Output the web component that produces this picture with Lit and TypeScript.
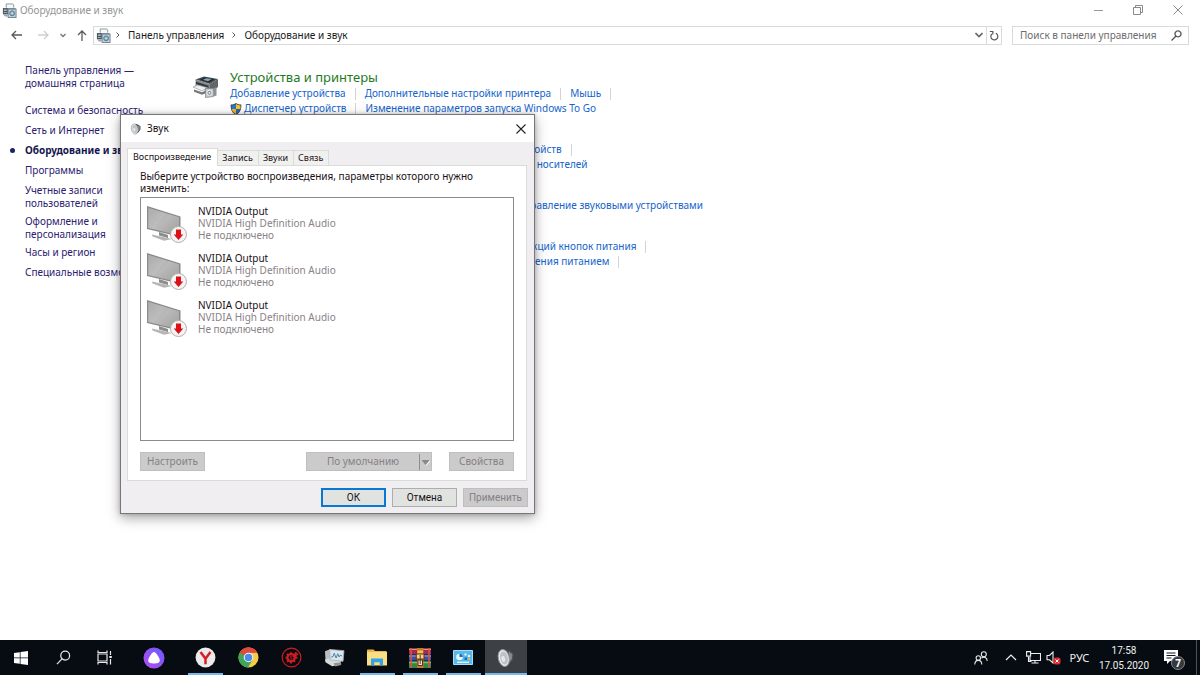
import { LitElement, html, css, svg, nothing } from "lit";
import { customElement, state } from "lit/decorators.js";
import { classMap } from "lit/directives/class-map.js";

/* ---------- icons ---------- */

const printerSmall = html`<svg viewBox="0 0 16 16" width="15" height="15" aria-hidden="true">
  <path d="M4.5 5V1h7l1 1.2V5" fill="#f4f6f7" stroke="#8b959b" />
  <path d="M1 5.5h13.5v6.5H1z" fill="#6d7880" />
  <path d="M1 5.5h5v6.5H1z" fill="#4c565e" />
  <path d="M2 7h3v1.2H2zM2 9.5h3v1H2z" fill="#b9d3e0" />
  <rect x="6.5" y="6.5" width="8.5" height="9" fill="#c3ced5" stroke="#6f8592" />
  <circle cx="10.8" cy="11" r="2.6" fill="#8fb4c9" stroke="#4f7890" />
  <circle cx="10.8" cy="11" r="0.8" fill="#eef6fa" />
  <path d="M1.5 12.5h4.5v2H3z" fill="#9aa4aa" />
</svg>`;

const printerLarge = html`<svg viewBox="0 0 26 24" width="26" height="24" aria-hidden="true">
  <path d="M2.500 4.500 11 1.500l14 2.500-8 5z" fill="#4a5054" />
  <path d="M6 4.500 12 2.300l10 1.900-6 3.600z" fill="#2a2e31" />
  <path d="M10 4.800 13.500 3.200l5 .9-3.500 2.200z" fill="#7fa9bf" />
  <path d="M2.500 4.500l14.500 4.500v8L2.500 12z" fill="#85898c" />
  <path d="M17 9l8-5v8l-8 6z" fill="#5f6568" />
  <path d="M3 6.800l12.500 4v2.200L3 9z" fill="#33383b" />
  <path d="M0 12 4.500 10l10 2.700-5.500 3.300z" fill="#eceeee" stroke="#8d9294" stroke-width=".6" />
  <path d="M1 14.500 9 17.200l5-2.500v3L9 19.700l-8-2.900z" fill="#74797c" />
  <path d="M12.500 13.500h8v8l-8 1z" fill="#c4c8ca" stroke="#7d8386" stroke-width=".7" />
  <circle cx="16.500" cy="17.800" r="2.600" fill="#8f979b" stroke="#f0f2f3" />
  <circle cx="16.500" cy="17.800" r=".9" fill="#f2f4f5" />
  <path d="M20.500 13.500l3-1.500v8.500l-3 1z" fill="#8c9295" />
</svg>`;

const shield = html`<svg viewBox="0 0 14 15" width="12" height="14" aria-hidden="true">
  <path d="M7 .5c1.800 1.300 3.900 1.800 6.200 1.800.3 6.200-1.700 10-6.200 12.200C2.500 12.300.5 8.500.8 2.300 3.100 2.300 5.200 1.800 7 .5z" fill="#3d4246" />
  <path d="M7 1.800v5.600H1.900C1.700 6 1.700 4.600 1.800 3.300 3.700 3.200 5.500 2.700 7 1.800z" fill="#2577c8" />
  <path d="M7 1.800v5.600h5.100c.2-1.400.2-2.800.1-4.100-1.900-.1-3.700-.6-5.200-1.500z" fill="#f7c331" />
  <path d="M7 7.400v5.900c-3-1.500-4.600-3.500-5.100-5.900z" fill="#f3b61f" />
  <path d="M7 7.400v5.900c3-1.500 4.600-3.500 5.100-5.900z" fill="#2166b0" />
</svg>`;

const speaker = (size: number) => html`<svg viewBox="0 0 20 22" width=${size} height=${size} aria-hidden="true">
  <path d="M9 1.500 14.500 3l4 3.500-.5 6-3.500 4.500L9 20.500z" fill="#4c5053" />
  <path d="M13 3.500l4 3.500-.5 5-3 4z" fill="#85898c" />
  <ellipse cx="7.500" cy="11" rx="6" ry="9.500" fill="#e6e9ea" stroke="#8c9296" transform="rotate(-12 7.500 11)" />
  <ellipse cx="7.800" cy="11" rx="4.200" ry="7.300" fill="#bcc2c6" transform="rotate(-12 7.800 11)" />
  <ellipse cx="7" cy="12" rx="2" ry="3.400" fill="#e3e7e9" transform="rotate(-12 7 12)" />
</svg>`;

const stroke = (w: number, h: number, d: string, color = "#5a5a5a", width = 1.3) =>
  html`<svg viewBox="0 0 ${w} ${h}" width=${w} height=${h} fill="none" stroke=${color} stroke-width=${width} aria-hidden="true">${svg`<path d=${d} />`}</svg>`;

const monitor = html`<svg viewBox="0 0 42 40" width="42" height="40" aria-hidden="true">
  <defs>
    <linearGradient id="screen" x1="0" y1="0" x2="1" y2="1">
      <stop offset="0" stop-color="#a2a2a2" /><stop offset=".5" stop-color="#b9b9b9" /><stop offset="1" stop-color="#9f9f9f" />
    </linearGradient>
  </defs>
  <path d="M6 29.500 19 32.500l7 1.500-8 1.800L6.500 31.500z" fill="#b5b5b5" />
  <path d="M13 27l9 3v3l-9-2.500z" fill="#8d8d8d" />
  <path d="M1 1 34.500 11.500V32L1 24z" fill="#8a8a8a" />
  <path d="M2.200 2.700 33 12.300V30.200L2.200 22.900z" fill="url(#screen)" />
  <path d="M2.200 2.700 20 8.200 8 24.200 2.200 22.900z" fill="#fff" opacity=".1" />
  <circle cx="32.500" cy="29.500" r="8" fill="#f6f4f4" stroke="#b3aeae" />
  <path d="M30 24.500h5v5h2.300L32.500 35l-4.800-5.500H30z" fill="#db1018" />
</svg>`;

const taskIcons: Record<string, unknown> = {
  start: html`<svg viewBox="0 0 14 14" width="14" height="14" fill="#fff"><path d="M0 2 5.800 1.200v5.400H0zM6.500 1.100 14 0v6.600H6.500zM0 7.300h5.800v5.500L0 12zM6.500 7.300H14V14l-7.500-1.100z" /></svg>`,
  search: html`<svg viewBox="0 0 16 16" width="15" height="15" fill="none" stroke="#e8e8e8" stroke-width="1.300"><circle cx="9.800" cy="6" r="4.700" /><path d="M6.400 9.400 1 15" /></svg>`,
  tasks: html`<svg viewBox="0 0 16 15" width="16" height="15" fill="none" stroke="#e8e8e8" stroke-width="1.200"><path d="M1 4h9v7H1zM1 .5v2h9v-2M1 14.500v-2h9v2M13.500 1v4M13.500 9v5.500" /><path d="M12.300 6h2.500v2h-2.500z" fill="#e8e8e8" stroke="none" /></svg>`,
  alice: html`<svg viewBox="0 0 22 22" width="22" height="22"><defs><linearGradient id="al" x1="1" y1="0" x2="0" y2="1"><stop offset="0" stop-color="#6a5cff" /><stop offset="1" stop-color="#b44cf0" /></linearGradient></defs><circle cx="11" cy="11" r="10.500" fill="url(#al)" /><path d="M11 5c2 0 5.800 6.200 5.800 8.600 0 2.400-3 3-5.800 3s-5.800-.6-5.800-3C5.200 11.200 9 5 11 5z" fill="#fff" /></svg>`,
  yandex: html`<svg viewBox="0 0 22 22" width="21" height="21"><circle cx="11" cy="11" r="10.400" fill="#eceaea" /><path d="M5.800 5.200 11 12.300l5.200-7.100M11 12v6" fill="none" stroke="#d81e20" stroke-width="2.600" /></svg>`,
  chrome: html`<svg viewBox="0 0 22 22" width="21" height="21"><circle cx="11" cy="11" r="10.500" fill="#f6cb45" /><path d="M11 11 1.900 5.700A10.500 10.500 0 0 1 20.100 5.700L11 6z" fill="#dc4b3e" /><path d="M11 11 1.900 5.750A10.500 10.500 0 0 0 10.500 21.500L15.300 13.400z" fill="#3ea55a" /><path d="M1.900 5.700 6.600 13.500 11 11V6z" fill="#3ea55a" /><path d="M1.900 5.700A10.500 10.500 0 0 1 20.100 6H11L6.500 9z" fill="#dc4b3e" /><circle cx="11" cy="11" r="5" fill="#f4f4f4" /><circle cx="11" cy="11" r="3.900" fill="#4a8bf0" /></svg>`,
  gear: html`<svg viewBox="0 0 22 22" width="21" height="21" fill="none" stroke="#d01c22"><circle cx="11" cy="11" r="9.800" stroke-width="1.200" /><circle cx="10.500" cy="11.300" r="3.800" stroke-width="2.400" /><path d="M10.500 5.500v2M10.500 15v2.300M4.700 11.300h2M14 11.300h3.200M6.300 7.200l1.500 1.500M6.300 15.500l1.500-1.500M14.700 15.500l-1.500-1.500" stroke-width="2" /><path d="M13 7.700h5M15.500 5.200v5" stroke-width="1.700" /><path d="M12 10c-2-1-3 .8-1.500 1.300s1 2-1.200 1.300" stroke-width="1" /></svg>`,
  perf: html`<svg viewBox="0 0 22 20" width="21" height="19"><path d="M1 3.500 7 1l1 10-6.500 2z" fill="#b9bec2" /><path d="M1 12l7-1.500 10 3-1.500 4-8 1.700L1.500 15z" fill="#d7dadc" /><path d="M10 16l8-1v3l-6 1.500z" fill="#8d9397" /><path d="M6 1.500 21 2.800 20 14 6.500 12.500z" fill="#dfe4e7" stroke="#aab0b4" stroke-width=".8" /><path d="M7.500 9.500l2-.5 1.200-3.500 2 5 1.700-4.500 1.500 3.500 1-2 2.300 1" fill="none" stroke="#3187b8" /></svg>`,
  explorer: html`<svg viewBox="0 0 20 17" width="20" height="17"><path d="M0 1.500C0 .7.500.5 1 .5h5.500L8 2h11.500v14H0z" fill="#e8b64a" /><path d="M0 3h20v13.500H0z" fill="#fbdd86" /><path d="M4 16.500V9.500h12v7h-3.300v-3.200H7.300v3.200z" fill="#31a4e8" /></svg>`,
  rar: html`<svg viewBox="0 0 22 20" width="22" height="20"><path d="M0 0h22v6H0z" fill="#a12a55" /><path d="M0 6.500h22v6H0z" fill="#3a4db0" /><path d="M0 13h22v7H0z" fill="#2f8a4a" /><path d="M0 1.500h22M0 8h22M0 14.700h22" stroke="#e0bf6a" stroke-width=".8" /><path d="M2 0v20M20 0v20" stroke="#d6574a" stroke-width="1.500" /><path d="M8 0h6.500v20H8z" fill="#c8762e" /><path d="M8.500 2.500h5.500v3H8.500z" fill="#f1c24a" /><path d="M7.300 6h7.700v5H7.300z" fill="#f4d58a" stroke="#6d3511" /><path d="M9 12h4.500v5.500H9z" fill="#e9e2d4" stroke="#5c2e14" /><path d="M11.200 7v9" stroke="#713815" /></svg>`,
  panel: html`<svg viewBox="0 0 20 15" width="20" height="15"><path d="M.5.500h19v14H.5z" fill="#58b8ea" stroke="#a5dcf7" /><circle cx="6.500" cy="7" r="3.300" fill="#e9f6fd" /><path d="M6.500 7V3.700A3.300 3.300 0 0 1 9.800 7z" fill="#1d6fb0" /><path d="M4 12.300h12" stroke="#e9f6fd" stroke-width="1.300" /><path d="M11.500 3.500h2v2h-2zM15 5h2v2h-2z" fill="#e9f6fd" /><path d="M11.500 7.500h2.500v2.500h-2.500z" fill="#1d6fb0" /><path d="M15 8h2v2h-2z" fill="#f0b44a" /></svg>`,
  sound: speaker(20),
};

/* ---------- data ---------- */

interface Link { text: string; shield?: boolean; bar?: boolean }
interface Section { title: string; icon?: boolean; rows: Link[][] }

const sections: Section[] = [
  { title: "Устройства и принтеры", icon: true, rows: [
    [{ text: "Добавление устройства", bar: true }, { text: "Дополнительные настройки принтера", bar: true }, { text: "Мышь", bar: true }],
    [{ text: "Диспетчер устройств", shield: true, bar: true }, { text: "Изменение параметров запуска Windows To Go" }],
  ] },
  { title: "Автозапуск", rows: [
    [{ text: "Настройка параметров по умолчанию для носителей или устройств", bar: true }],
    [{ text: "Автоматическое воспроизведение компакт-дисков или других носителей" }],
  ] },
  { title: "Звук", rows: [
    [{ text: "Настройка громкости", bar: true }, { text: "Изменение системных звуков", bar: true }, { text: "Управление звуковыми устройствами" }],
  ] },
  { title: "Электропитание", rows: [
    [{ text: "Изменение параметров энергосбережения", bar: true }, { text: "Настройка функций кнопок питания", bar: true }],
    [{ text: "Настройка перехода в спящий режим", bar: true }, { text: "Выбор схемы управления питанием", bar: true }],
  ] },
];

const categories: { lines: string[]; current?: boolean }[] = [
  { lines: ["Система и безопасность"] },
  { lines: ["Сеть и Интернет"] },
  { lines: ["Оборудование и звук"], current: true },
  { lines: ["Программы"] },
  { lines: ["Учетные записи", "пользователей"] },
  { lines: ["Оформление и", "персонализация"] },
  { lines: ["Часы и регион"] },
  { lines: ["Специальные возможности"] },
];

const control = css`
  :host { display: block; }
  * { box-sizing: border-box; }
  button { font: inherit; color: inherit; background: none; border: 0; padding: 0; margin: 0; border-radius: 0; }
  a { color: inherit; text-decoration: none; }
  ul { list-style: none; margin: 0; padding: 0; }
  svg { display: block; flex: none; }
`;

/* ---------- window header ---------- */

@customElement("explorer-header")
class ExplorerHeader extends LitElement {
  static styles = [control, css`
    .title { display: flex; align-items: center; height: 20px; padding-left: 2px; gap: 3px; color: #959595; }
    .caption { display: flex; margin-left: auto; padding-right: 2px; }
    .caption button { width: 40px; height: 18px; display: grid; place-items: center; }
    .nav { display: flex; align-items: center; height: 30px; padding: 0 11px 0 7px; color: #1a1a1a; }
    .step { width: 19px; height: 19px; display: grid; place-items: center; }
    .arrows { display: flex; flex: none; }
    .forward { margin-left: 8px; }
    .address { flex: 1; display: flex; align-items: center; height: 19px; margin-left: 2px; border: 1px solid #d9dbdb; padding-left: 2px; }
    .crumbs { display: flex; align-items: center; gap: 8px; padding-left: 5px; }
    .address .drop { margin-left: auto; width: 14px; height: 17px; display: grid; place-items: center; }
    .address .reload { width: 15px; height: 17px; border-left: 1px solid #d9dbdb; display: grid; place-items: center; }
    .search { display: flex; align-items: center; width: 177px; height: 19px; margin-left: 10px; border: 1px solid #d9dbdb; padding: 0 6px 0 7px; }
    .search input { flex: 1; min-width: 0; border: 0; outline: 0; padding: 0; font: inherit; background: none; }
    .search input::placeholder { color: #6d6d6d; opacity: 1; }
  `];

  render() {
    return html`
      <div class="title">
        ${printerSmall}<span>Оборудование и звук</span>
        <div class="caption">
          <button aria-label="Свернуть">${stroke(9, 9, "M0 4.500h9", "#999", 1)}</button>
          <button aria-label="Свернуть в окно">${stroke(10, 10, "M.5 2.500h7v7h-7zM2.500 2.500v-2h7v7h-2", "#8a8a8a", 1)}</button>
          <button aria-label="Закрыть">${stroke(10, 10, "M.5.500l9 9M9.500.500l-9 9", "#8a8a8a", 1)}</button>
        </div>
      </div>
      <div class="nav">
        <div class="arrows">
          <button class="step" aria-label="Назад">${stroke(11, 10, "M11 5H1M5 1 1 5l4 4")}</button>
          <button class="step forward" aria-label="Вперед">${stroke(11, 10, "M0 5h10M6 1l4 4-4 4", "#cfcfcf")}</button>
          <button class="step" aria-label="Последние расположения">${stroke(6, 5, "M.5 1 3 3.500 5.500 1", "#777")}</button>
          <button class="step" aria-label="Вверх">${stroke(10, 11, "M5 11V1M1 5l4-4 4 4")}</button>
        </div>
        <nav class="address" aria-label="Адрес">
          ${printerSmall}
          <div class="crumbs">
            ${stroke(4, 6, "M.5.500 3 3 .5 5.500", "#555", 1)}<a href="#panel">Панель управления</a>
            ${stroke(4, 6, "M.5.500 3 3 .5 5.500", "#555", 1)}<a href="#hardware">Оборудование и звук</a>
          </div>
          <button class="drop" aria-label="Список адресов">${stroke(8, 6, "M.5 1 4 4.500 7.500 1", "#666", 1.6)}</button>
          <button class="reload" aria-label="Обновить">${stroke(10, 11, "M6.800 3.200a3.500 3.500 0 1 1-4 .8M.8 1.500h3v3", "#555", 1.2)}</button>
        </nav>
        <div class="search">
          <input type="search" aria-label="Поиск в панели управления" placeholder="Поиск в панели управления" />
          ${stroke(11, 11, "M4.800 6.200.5 10.500M7 .8a3 3 0 1 0 .01 0z", "#555", 1.3)}
        </div>
      </div>`;
  }
}

/* ---------- sidebar and sections ---------- */

@customElement("control-panel")
class ControlPanel extends LitElement {
  static styles = [control, css`
    .layout { display: flex; padding-top: 14px; }
    .side { width: 193px; flex: none; padding-left: 25px; line-height: 13px; color: #2b2170; white-space: nowrap; }
    .home { display: block; margin-bottom: 14px; }
    .line { display: block; }
    .side li { margin-bottom: 7px; }
    .side li.pair { margin-bottom: 5px; }
    .current { display: flex; align-items: center; font-weight: 700; color: #151550; }
    .current::before { content: ""; width: 5px; height: 5px; border-radius: 50%; background: #1d2268; margin: 0 10px 0 -15px; }
    .main { flex: 1; min-width: 0; padding-top: 5px; display: flex; flex-direction: column; gap: 9px; white-space: nowrap; }
    .section { display: flex; gap: 11px; }
    .picture { width: 26px; flex: none; padding-top: 6px; }
    h2 { margin: 0; font-size: 13px; line-height: 17px; font-weight: 400; color: #1e7a1e; }
    .row { display: flex; align-items: center; height: 15px; color: #1464cc; }
    .row a { display: flex; align-items: center; gap: 2px; }
    .bar { width: 1px; height: 12px; background: #d3d3d3; margin: 0 9px; }
  `];

  render() {
    return html`<div class="layout">
      <nav class="side">
        <a class="home" href="#home"><span class="line">Панель управления —</span><span class="line">домашняя страница</span></a>
        <ul>${categories.map((c) => html`
          <li class=${classMap({ pair: c.lines.length > 1 })}>
            <a href="#category" class=${classMap({ line: !c.current, current: !!c.current })}>
              ${c.lines.map((l) => html`<span class="line">${l}</span>`)}</a>
          </li>`)}</ul>
      </nav>
      <main class="main">${sections.map((s) => html`
        <section class="section">
          <div class="picture">${s.icon ? printerLarge : nothing}</div>
          <div>
            <h2>${s.title}</h2>
            ${s.rows.map((r) => html`<div class="row">${r.map((l) => html`
              <a href="#task">${l.shield ? shield : nothing}<span>${l.text}</span></a>${l.bar ? html`<span class="bar"></span>` : nothing}`)}</div>`)}
          </div>
        </section>`)}
      </main>
    </div>`;
  }
}

/* ---------- sound dialog ---------- */

@customElement("sound-dialog")
class SoundDialog extends LitElement {
  @state() private tab = 0;

  static styles = [control, css`
    .dialog { border: 1px solid #77777b; background: #f0eef0; box-shadow: 0 4px 12px rgba(0, 0, 0, .35), 0 0 4px rgba(0, 0, 0, .2); color: #1a1016; }
    .title { display: flex; align-items: center; height: 27px; background: #fff; padding: 0 4px 0 9px; gap: 5px; }
    .title button { width: 19px; height: 20px; margin-left: auto; display: grid; place-items: center; }
    .body { padding: 6px; }
    .tabs { display: flex; align-items: flex-end; height: 17px; font-size: 9px; }
    .footer { font-family: Roboto, sans-serif; }
    .tab { height: 15px; line-height: 14px; padding: 0 5px 0 4px; border: 1px solid #dadcda; border-left: 0; border-bottom: 0; background: #f0f0ef; }
    .tab.on { height: 18px; padding: 0 6px 2px 5px; border-left: 1px solid #dadcda; background: #fff; margin-bottom: -1px; z-index: 1; }
    .page { background: #fff; border: 1px solid #dadcda; margin-right: 1px; padding: 4px 12px 9px; }
    p { margin: 0; line-height: 12px; }
    .devices { height: 244px; margin-top: 3px; border: 1px solid #8c8994; padding-top: 7px; }
    .device { display: flex; height: 47px; padding-left: 5px; gap: 10px; line-height: 12px; color: #8a8288; }
    .name { color: #1a1016; }
    .actions { display: flex; align-items: center; margin-top: 11px; gap: 17px; }
    .btn { width: 65px; height: 19px; border: 1px solid #adadad; background: #e1e3e1; line-height: 17px; text-align: center; }
    .btn:disabled, .split button:disabled { border-color: #bfbfbf; background: #cccbcc; color: #858085; }
    .split { display: flex; margin-left: auto; }
    .split .label { width: 113px; height: 19px; border: 1px solid; border-right: 0; }
    .split .more { width: 13px; height: 19px; border: 1px solid; border-left: 0; display: grid; place-items: center; }
    .footer { display: flex; justify-content: flex-end; gap: 6px; padding-top: 7px; }
    .btn.primary { border: 2px solid #0878d4; line-height: 15px; }
  `];

  render() {
    const tabs = ["Воспроизведение", "Запись", "Звуки", "Связь"];
    return html`<section class="dialog" role="dialog" aria-label="Звук">
      <div class="title">${speaker(12)}<span>Звук</span>
        <button aria-label="Закрыть">${stroke(10, 10, "M.5.500l9 9M9.500.500l-9 9", "#222", 1.1)}</button></div>
      <div class="body">
        <div class="tabs" role="tablist">${tabs.map((t, i) => html`
          <button role="tab" aria-selected=${i === this.tab} class=${classMap({ tab: true, on: i === this.tab })} @click=${() => (this.tab = i)}>${t}</button>`)}</div>
        <div class="page" role="tabpanel">
          <p>Выберите устройство воспроизведения, параметры которого нужно изменить:</p>
          <ul class="devices">${[0, 1, 2].map(() => html`
            <li class="device">${monitor}<div><div class="name">NVIDIA Output</div><div>NVIDIA High Definition Audio</div><div>Не подключено</div></div></li>`)}</ul>
          <div class="actions">
            <button class="btn" disabled>Настроить</button>
            <div class="split">
              <button class="label" disabled>По умолчанию</button>
              <button class="more" disabled aria-label="Другие варианты"><svg viewBox="0 0 12 16" width="12" height="16"><path d="M.5 0v16" stroke="#8f8f8f" /><path d="M2.500 6h8L6.500 11z" fill="#8a8a8a" /><path d="M7 11.500 11 7" stroke="#fff" /></svg></button>
            </div>
            <button class="btn" disabled>Свойства</button>
          </div>
        </div>
        <div class="footer">
          <button class="btn primary">ОК</button>
          <button class="btn">Отмена</button>
          <button class="btn" disabled>Применить</button>
        </div>
      </div>
    </section>`;
  }
}

/* ---------- taskbar ---------- */

@customElement("task-bar")
class TaskBar extends LitElement {
  static styles = [control, css`
    .bar { display: flex; height: 35px; background: #070c12; color: #f0f0f0; }
    .system, .apps { display: flex; }
    .app { position: relative; width: 42px; height: 35px; display: grid; place-items: center; }
    .alice { margin: 0 9px 0 7px; }
    .apps { gap: 1px; }
    .open::after { content: ""; width: 35px; height: 2px; background: #76b9ed; position: absolute; bottom: 0; }
    .app.active { background: #3d4045; }
    .active::after { width: 42px; }
    .tray { display: flex; align-items: center; margin-left: auto; }
    .tray button { height: 35px; display: grid; place-items: center; }
    .people { width: 30px; }
    .up { width: 24px; margin-left: 3px; }
    .net, .vol { width: 20px; }
    .lang { width: 33px; font-size: 11px; }
    .clock { width: 56px; line-height: 15px; font-family: Roboto, sans-serif; text-align: center; }
    .note { width: 44px; }
    .peek { width: 4px; height: 35px; border-left: 1px solid #4d5156; }
    .count { font-weight: 700; font-size: 10px; }
  `];

  private app(name: string, label: string, cls = "") {
    return html`<button class="app ${cls}" aria-label=${label}>${taskIcons[name]}</button>`;
  }

  render() {
    return html`<footer class="bar">
      <div class="system">
        ${this.app("start", "Пуск")}${this.app("search", "Поиск")}${this.app("tasks", "Представление задач")}${this.app("alice", "Алиса", "alice")}
      </div>
      <div class="apps">
        ${this.app("yandex", "Яндекс.Браузер", "open")}${this.app("chrome", "Chrome")}${this.app("gear", "Настройка")}${this.app("perf", "Монитор ресурсов")}
        ${this.app("explorer", "Проводник", "open")}${this.app("rar", "WinRAR", "open")}${this.app("panel", "Панель управления", "open")}${this.app("sound", "Звук", "open active")}
      </div>
      <div class="tray">
        <button class="people" aria-label="Люди"><svg viewBox="0 0 14 14" width="14" height="14" fill="none" stroke="#e8e8e8" stroke-width="1.100"><circle cx="9.800" cy="3.200" r="2.500" /><circle cx="4.300" cy="7" r="2.200" /><path d="M.8 13.500c0-5.500 7-5.500 7 0M7.500 7c2.500-2 5.700-.5 5.700 3" /></svg></button>
        <button class="up" aria-label="Скрытые значки">${stroke(12, 7, "M1 6l5-5 5 5", "#eee", 1.2)}</button>
        <button class="net" aria-label="Сеть"><svg viewBox="0 0 15 13" width="15" height="13" fill="none" stroke="#eee" stroke-width="1.100"><path d="M5 2.500h9.500v7H4V6M9 9.500v2.500M5.500 12h7M2.500 6v4.500h3" /><path d="M.6.600h4v4.500h-4z" fill="#070c12" /></svg></button>
        <button class="vol" aria-label="Звук отключен"><svg viewBox="0 0 15 14" width="15" height="14"><path d="M1 4.500h2.500L7 1v11L3.500 8.800H1z" fill="none" stroke="#eee" stroke-width="1.100" /><rect x="7.500" y="6.500" width="7" height="7" rx="2" fill="#dc2b32" /><path d="M9.500 8.500l3 3M12.500 8.500l-3 3" stroke="#fff" /></svg></button>
        <button class="lang">РУС</button>
        <button class="clock"><span>17:58<br />17.05.2020</span></button>
        <button class="note" aria-label="Уведомления"><svg viewBox="0 0 24 24" width="24" height="24"><path d="M2 4h14v11H8l-3 3v-3H2z" fill="#fff" /><path d="M4.500 7h9M4.500 9.500h9M4.500 12h5" stroke="#11161c" /><circle cx="16" cy="17" r="6.500" fill="#35383c" stroke="#85888b" /><text class="count" x="16" y="20.500" text-anchor="middle" fill="#fff">7</text></svg></button>
        <span class="peek"></span>
      </div>
    </footer>`;
  }
}

/* ---------- desktop ---------- */

@customElement("app-root")
class AppRoot extends LitElement {
  static styles = css`
    :host { display: block; font: 10px/15px "Noto Sans", "Open Sans", sans-serif; }
    .desktop { position: relative; display: flex; flex-direction: column; min-height: 100vh; background: #fff; overflow: hidden; }
    .content { flex: 1; }
    .sound { position: absolute; left: 120px; top: 114px; width: 415px; z-index: 2; }
  `;

  render() {
    return html`<div class="desktop">
      <explorer-header></explorer-header>
      <control-panel class="content"></control-panel>
      <task-bar></task-bar>
      <sound-dialog class="sound"></sound-dialog>
    </div>`;
  }
}
